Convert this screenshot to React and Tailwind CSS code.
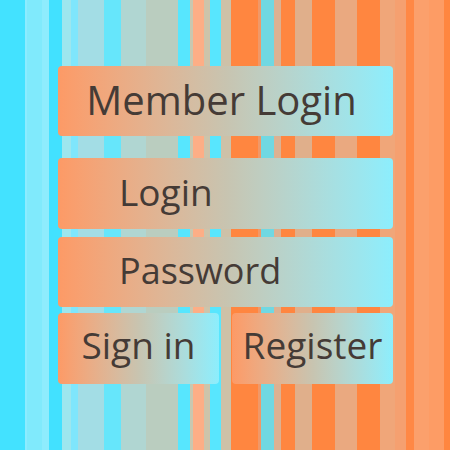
import React from "react";

// background stripes: [width, colour]
const stripes = [
  [25, "#43e2ff"],
  [2, "#8cecff"],
  [15, "#80eafc"],
  [7, "#8eecfd"],
  [13, "#42e1ff"],
  [9, "#9de6ee"],
  [7, "#7fe6fc"],
  [26, "#a3dde5"],
  [17, "#66e6fb"],
  [25, "#b0d6d2"],
  [32, "#bacdbf"],
  [12, "#57e6fe"],
  [3, "#c8c8b0"],
  [11, "#fdae86"],
  [6, "#cdc4ab"],
  [11, "#58e6fe"],
  [10, "#cdc1a8"],
  [27, "#ff8640"],
  [3, "#f09868"],
  [13, "#70d8e2"],
  [7, "#dcb192"],
  [14, "#ff8640"],
  [17, "#e0af8b"],
  [23, "#ff8640"],
  [22, "#eaa980"],
  [23, "#ff8640"],
  [15, "#f0a679"],
  [11, "#f5a070"],
  [8, "#ff8845"],
  [15, "#fba06c"],
  [15, "#fd9c65"],
  [6, "#ff8640"],
];

const box =
  "rounded-[4px] bg-gradient-to-r from-[#fd9a66] via-[#c8c4b0] to-[#8ceefd] text-[#453b36] flex items-center";

export default function App() {
  return (
    <div
      className="relative w-[450px] h-[450px] overflow-hidden"
      style={{ fontFamily: '"Open Sans", "Noto Sans", sans-serif' }}
    >
      <div className="absolute inset-0 flex">
        {stripes.map(([w, c], i) => (
          <div key={i} className="h-full shrink-0" style={{ width: w, background: c }} />
        ))}
      </div>

      <div className="relative flex flex-col pt-[66px] pl-[58px] w-[393px]">
        <div className={`${box} h-[70px] justify-center text-[40px] pb-[2px]`}>
          <span className="-ml-2">Member Login</span>
        </div>

        <div className={`${box} h-[71px] mt-[22px] pl-[61px] text-[37px] pb-[3px]`}>Login</div>
        <div className={`${box} h-[70px] mt-[8px] pl-[61px] text-[36px] pb-[3px]`}>Password</div>

        <div className="flex gap-[13px] mt-[6px]">
          <div className={`${box} w-[161px] h-[71px] justify-center text-[37px] pb-[8px]`}>Sign in</div>
          <div className={`${box} w-[161px] h-[71px] justify-center text-[37px] pb-[8px]`}>Register</div>
        </div>
      </div>
    </div>
  );
}
